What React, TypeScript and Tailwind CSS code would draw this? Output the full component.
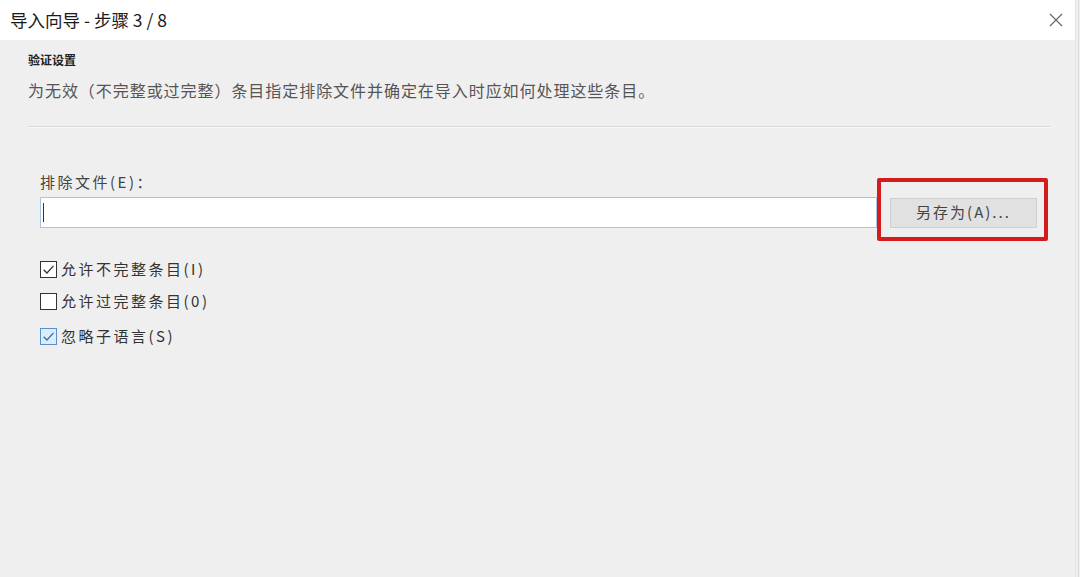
import { useState } from "react";

const font = "font-['Noto_Sans_CJK_SC','Noto_Sans',sans-serif]";

const Check = ({ checked, focused, label, h }: { checked: boolean; focused?: boolean; label: string; h: string }) => (
    <label className={`flex items-center gap-[4px] ${h}`}>
        <span
            className={`flex items-center justify-center w-[17px] h-[17px] border ${focused ? "border-[#5b8fc9] bg-[#dcecfc]" : "border-[#333333] bg-white"}`}
        >
            {checked && (
                <svg width="13" height="13" viewBox="0 0 12 12">
                    <path d="M1.5 6.2 L4.6 9.2 L10.6 2.6" fill="none" stroke={focused ? "#3b6ea5" : "#333"} strokeWidth="1.2" />
                </svg>
            )}
        </span>
        <span className="text-[15px] text-[#333] tracking-[2.5px]">{label}</span>
    </label>
);

const App = () => {
    const [file, setFile] = useState("");

    return (
        <div className={`w-[1080px] h-[577px] bg-[#efefef] flex ${font}`}>
            <div className="flex-1 flex flex-col">
                {/* TITLE BAR */}
                <div className="h-[40px] bg-white flex items-center justify-between pl-[10px] pr-[12px]">
                    <span className="text-[17.5px] text-[#1a1a1a]">导入向导 - 步骤 3 / 8</span>
                    <svg width="14" height="14" viewBox="0 0 14 14">
                        <path d="M1 1 L13 13 M13 1 L1 13" stroke="#666" strokeWidth="1.2" />
                    </svg>
                </div>

                {/* HEADER */}
                <div className="px-[28px] pt-[12px]">
                    <div className="text-[12px] font-bold text-[#222] leading-[16px]">验证设置</div>
                    <div className="mt-[9px] text-[16px] text-[#555] leading-[26px] tracking-[0.95px]">
                        为无效（不完整或过完整）条目指定排除文件并确定在导入时应如何处理这些条目。
                    </div>
                    <div className="mt-[23px] mr-[-3px] border-t border-b border-t-[#d9d9d9] border-b-[#f8f8f8]" />
                </div>

                {/* FILE */}
                <div className="pl-[40px] pr-[38px] pt-[44px]">
                    <div className="text-[15px] text-[#444] leading-[20px] tracking-[2.5px]">排除文件(E)：</div>
                    <div className="mt-[5px] flex items-center">
                        <div className="relative w-[837px] h-[31px] bg-white border border-[#a9c4e0]">
                            <input
                                value={file}
                                onChange={(e) => setFile(e.target.value)}
                                className="w-full h-full px-[2px] outline-none bg-transparent text-[14px]"
                            />
                            <span className="absolute left-[2px] top-[5px] w-[1px] h-[19px] bg-[#333]" />
                        </div>
                        <div className="relative ml-[13px]">
                            <button className="w-[147px] h-[30px] bg-[#e1e1e1] border border-[#cfcfcf] text-[15px] text-[#444] tracking-[2px]">
                                另存为(A)...
                            </button>
                            <div className="absolute left-[-13px] top-[-20px] w-[171px] h-[63px] border-[4px] border-[#d51c1c] rounded-[2px]" />
                        </div>
                    </div>
                </div>

                {/* OPTIONS */}
                <div className="pl-[40px] pt-[25px] flex flex-col">
                    <Check checked h="h-[32px]" label="允许不完整条目(I)" />
                    <Check checked={false} h="h-[33px]" label="允许过完整条目(0)" />
                    <Check checked focused h="h-[36px]" label="忽略子语言(S)" />
                </div>
            </div>
            <div className="w-[5px] flex">
                <div className="w-[1px] bg-[#e3e3e3]" />
                <div className="w-[2px]" />
                <div className="w-[1px] bg-[#dcdcdc]" />
            </div>
        </div>
    );
};

export default App;
